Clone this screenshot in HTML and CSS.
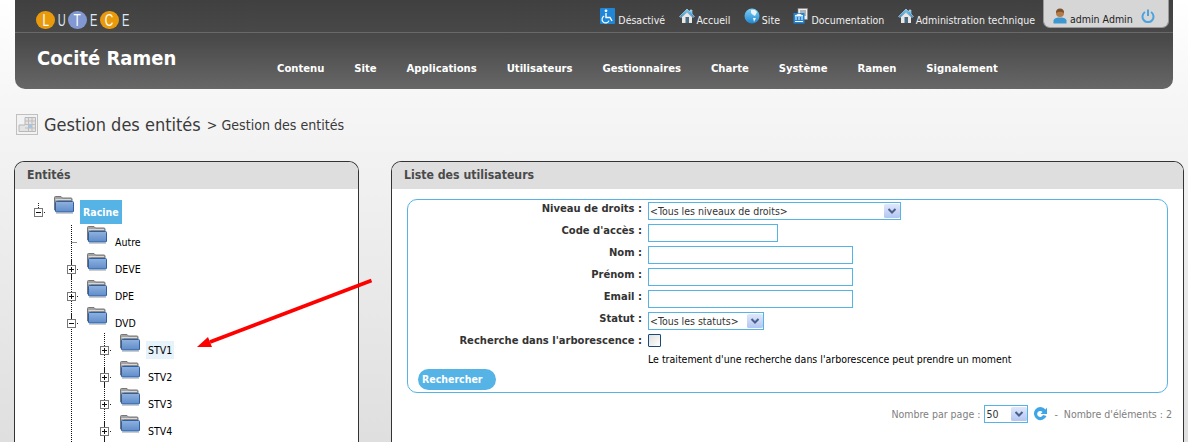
FILE: index.html
```html
<!DOCTYPE html>
<html lang="fr">
<head>
<meta charset="utf-8">
<title>Gestion des entités</title>
<link rel="stylesheet" href="styles.css">
</head>
<body>
<svg class="defs" width="0" height="0" aria-hidden="true">
  <defs>
    <linearGradient id="fb" x1="0" y1="0" x2="0" y2="1"><stop offset="0" stop-color="#8fb2e0"/><stop offset="1" stop-color="#5f8cc8"/></linearGradient>
    <linearGradient id="hb" x1="0" y1="0" x2="0" y2="1"><stop offset="0" stop-color="#7fd0f5"/><stop offset="1" stop-color="#1f86cf"/></linearGradient>
    <linearGradient id="cb" x1="0" y1="0" x2="0" y2="1"><stop offset="0" stop-color="#dfe7fb"/><stop offset="1" stop-color="#b3c6f1"/></linearGradient>
    <symbol id="folder" viewBox="0 0 20 18">
      <path d="M0.5 1.5 Q0.5 0.5 1.5 0.5 H7 L8.5 2 H17 Q18 2 18 3 V5 H4 V14 H0.5 Z" fill="#a3a3a3" stroke="#777"/>
      <path d="M1.5 3.5 H17" stroke="#d8d8d8"/>
      <rect x="1.5" y="5.5" width="18" height="10.5" rx="1" fill="url(#fb)" stroke="#2f5f9f"/>
      <path d="M2 17.5 H19" stroke="#ccc"/>
    </symbol>
    <symbol id="plus" viewBox="0 0 14 20">
      <path d="M4.5 0 V5" stroke="#222" stroke-dasharray="1 1"/>
      <path d="M4.5 14 V20" stroke="#222" stroke-dasharray="1 1"/>
      <rect x="0.5" y="5.5" width="8" height="8" fill="#fff" stroke="#777"/>
      <path d="M2 9.5 H7 M4.5 7 V12" stroke="#111"/>
      <path d="M10 9.5 H11" stroke="#222"/>
    </symbol>
    <symbol id="minus" viewBox="0 0 14 20">
      <path d="M4.5 0 V5" stroke="#222" stroke-dasharray="1 1"/>
      <rect x="0.5" y="5.5" width="8" height="8" fill="#fff" stroke="#777"/>
      <path d="M2 9.5 H7" stroke="#111"/>
      <path d="M10 9.5 H11" stroke="#222"/>
    </symbol>
    <symbol id="leaf" viewBox="0 0 14 20">
      <path d="M4.5 9.5 H10" stroke="#222" stroke-dasharray="1 1"/>
    </symbol>
    <symbol id="house" viewBox="0 0 16 16">
      <path d="M8 1 L0.5 8.5 L2 9.5 L8 4 L14 9.5 L15.5 8.5 L13 6 V2 H11 V4 Z" fill="url(#hb)" stroke="#d8f0ff" stroke-width=".5"/>
      <path d="M3 9 L8 4.5 L13 9 V15 H3 Z" fill="#e8e8e8"/>
      <rect x="6.5" y="9" width="3.5" height="6" fill="#4a6a80"/>
    </symbol>
    <symbol id="wheel" viewBox="0 0 15 16">
      <rect x="0" y="0" width="15" height="16" rx="1" fill="#1f86d8"/>
      <circle cx="6" cy="2.8" r="1.4" fill="#fff"/>
      <path d="M6 5 V9.5 H10 L12 13" fill="none" stroke="#fff" stroke-width="1.4"/>
      <path d="M4.2 8 A3.6 3.6 0 1 0 9 12.6" fill="none" stroke="#fff" stroke-width="1.2"/>
    </symbol>
    <symbol id="globe" viewBox="0 0 16 16">
      <circle cx="8" cy="8" r="7.5" fill="url(#hb)"/>
      <path d="M7 2 Q11 1 13 4 L11 8 L9 7 L7 5 Z M9 10 L12 10 L10 14 Z" fill="#e8f4fb"/>
    </symbol>
    <symbol id="doc" viewBox="0 0 15 16">
      <rect x="5" y="0.5" width="9.5" height="11" fill="#eee" stroke="#888" stroke-width=".6"/>
      <path d="M7 3 H13 M7 5 H13 M7 7 H13" stroke="#777"/>
      <rect x="0.5" y="5" width="11" height="10.5" fill="#1f86d8"/>
      <path d="M2 8 L6 6 L10 8 Z M3 9 V12 M6 9 V12 M9 9 V12 M2 13.5 H10" stroke="#fff" fill="#fff"/>
    </symbol>
    <symbol id="user" viewBox="0 0 14 16">
      <path d="M0.5 15.5 V12.5 Q1 10 5 9.5 H9 Q13 10 13.5 12.5 V15.5 Z" fill="#3f97d2"/>
      <circle cx="7" cy="5" r="4" fill="#b47a48"/>
      <path d="M3 5 Q3 0.5 7 0.5 Q11 0.5 11 5 Q7 2.5 3 5 Z" fill="#7a5230"/>
    </symbol>
    <symbol id="power" viewBox="0 0 14 14">
      <path d="M4 3 A5.5 5.5 0 1 0 10 3" fill="none" stroke="#4aa3de" stroke-width="2"/>
      <path d="M7 0.5 V7" stroke="#4aa3de" stroke-width="2"/>
    </symbol>
    <symbol id="chev" viewBox="0 0 16 14">
      <rect x="0" y="0" width="16" height="14" rx="1.5" fill="url(#cb)"/>
      <path d="M4.5 5 L8 8.5 L11.5 5" fill="none" stroke="#4a5f8c" stroke-width="2"/>
    </symbol>
    <symbol id="refresh" viewBox="0 0 16 16">
      <path d="M13.5 3.5 A6.5 6.5 0 1 0 14.5 10 L11 9 A3 3 0 1 1 10.5 6 L8.5 8 H15 V1.5 Z" fill="#3fa6e6"/>
    </symbol>
    <symbol id="pageicon" viewBox="0 0 22 21">
      <rect x="0.5" y="0.5" width="21" height="20" fill="#f2f2f2" stroke="#c0c0c0"/>
      <path d="M9 3.5 H19.5 V17.5 H3 V11 H9 Z" fill="#e3e3e3" stroke="#b8b8b8"/>
      <path d="M9 7 H19.5 M9 10.5 H19.5 M9 14 H19.5 M12.5 3.5 V17.5 M16 3.5 V17.5" stroke="#bdbdbd"/>
      <rect x="12.5" y="10.5" width="3.5" height="3.5" fill="#a9c3e0"/>
    </symbol>
  </defs>
</svg>

<header class="site-head">
  <div class="head-top">
    <div class="logo">
      <span class="ball ball-o"><span class="nl">L</span></span><span class="lt">U</span><span class="ball ball-b"><span class="nl">T</span></span><span class="lt">E</span><span class="ball ball-o"><span class="nl">C</span></span><span class="lt">E</span>
    </div>
    <nav class="tools">
      <a class="tool"><svg class="ic15"><use href="#wheel"/></svg>Désactivé</a>
      <a class="tool"><svg class="ic16"><use href="#house"/></svg>Accueil</a>
      <a class="tool"><svg class="ic16"><use href="#globe"/></svg>Site</a>
      <a class="tool"><svg class="ic15"><use href="#doc"/></svg>Documentation</a>
      <a class="tool"><svg class="ic16"><use href="#house"/></svg>Administration technique</a>
    </nav>
    <div class="userbox">
      <svg class="ic-user"><use href="#user"/></svg><span>admin Admin</span><svg class="ic-power"><use href="#power"/></svg>
    </div>
  </div>
  <div class="head-main">
    <div class="brand">Cocité Ramen</div>
    <nav class="menu">
      <a>Contenu</a><a>Site</a><a>Applications</a><a>Utilisateurs</a><a>Gestionnaires</a><a>Charte</a><a>Système</a><a>Ramen</a><a>Signalement</a>
    </nav>
  </div>
</header>

<div class="crumb">
  <svg class="ic-page"><use href="#pageicon"/></svg>
  <span class="crumb-main">Gestion des entités</span>
  <span class="crumb-sub">&gt; Gestion des entités</span>
</div>

<main class="columns">
  <section class="panel panel-left">
    <h2 class="panel-head">Entités</h2>
    <div class="tree">
      <div class="node node-root">
        <svg class="tg"><use href="#minus"/></svg><svg class="fd"><use href="#folder"/></svg><span class="lb lb-root">Racine</span>
      </div>
      <ul class="branch">
        <li><div class="node"><svg class="tg"><use href="#leaf"/></svg><svg class="fd"><use href="#folder"/></svg><span class="lb">Autre</span></div></li>
        <li><div class="node"><svg class="tg"><use href="#plus"/></svg><svg class="fd"><use href="#folder"/></svg><span class="lb">DEVE</span></div></li>
        <li><div class="node"><svg class="tg"><use href="#plus"/></svg><svg class="fd"><use href="#folder"/></svg><span class="lb">DPE</span></div></li>
        <li><div class="node"><svg class="tg"><use href="#minus"/></svg><svg class="fd"><use href="#folder"/></svg><span class="lb">DVD</span></div>
          <ul class="branch">
            <li><div class="node"><svg class="tg"><use href="#plus"/></svg><svg class="fd"><use href="#folder"/></svg><span class="lb lb-hover">STV1</span></div></li>
            <li><div class="node"><svg class="tg"><use href="#plus"/></svg><svg class="fd"><use href="#folder"/></svg><span class="lb">STV2</span></div></li>
            <li><div class="node"><svg class="tg"><use href="#plus"/></svg><svg class="fd"><use href="#folder"/></svg><span class="lb">STV3</span></div></li>
            <li><div class="node"><svg class="tg"><use href="#plus"/></svg><svg class="fd"><use href="#folder"/></svg><span class="lb">STV4</span></div></li>
          </ul>
        </li>
      </ul>
    </div>
  </section>

  <section class="panel panel-right">
    <h2 class="panel-head">Liste des utilisateurs</h2>
    <div class="panel-body">
      <form class="filter">
        <div class="row"><label class="lab">Niveau de droits :</label><span class="sel w-253"><select><option>&lt;Tous les niveaux de droits&gt;</option></select><svg class="chev"><use href="#chev"/></svg></span></div>
        <div class="row"><label class="lab">Code d'accès :</label><input class="txt w-130" type="text"></div>
        <div class="row"><label class="lab">Nom :</label><input class="txt w-205" type="text"></div>
        <div class="row"><label class="lab">Prénom :</label><input class="txt w-205" type="text"></div>
        <div class="row"><label class="lab">Email :</label><input class="txt w-205" type="text"></div>
        <div class="row"><label class="lab">Statut :</label><span class="sel w-116"><select><option>&lt;Tous les statuts&gt;</option></select><svg class="chev"><use href="#chev"/></svg></span></div>
        <div class="row row-check"><label class="lab">Recherche dans l'arborescence :</label><input class="chk" type="checkbox"></div>
        <div class="help">Le traitement d'une recherche dans l'arborescence peut prendre un moment</div>
        <button class="btn" type="button">Rechercher</button>
      </form>
      <div class="pager">
        <span>Nombre par page :</span>
        <span class="sel w-44"><select><option>50</option></select><svg class="chev"><use href="#chev"/></svg></span>
        <svg class="ic-refresh"><use href="#refresh"/></svg>
        <span class="dash">-</span>
        <span>Nombre d'éléments : 2</span>
      </div>
    </div>
  </section>
</main>

<svg class="arrow" width="190" height="80" viewBox="0 0 190 80" aria-hidden="true">
  <path d="M181.5 6.5 L20 68" stroke="#f00" stroke-width="3.6" fill="none"/>
  <path d="M7 73 L18 63 L22 73 Z" fill="#f00"/>
</svg>
</body>
</html>
```
FILE: styles.css
```css
* { box-sizing: border-box; }
html, body { margin: 0; height: 442px; overflow: hidden; }
body {
  font-family: "DejaVu Sans Condensed", "DejaVu Sans", sans-serif;
  font-size: 10.5px;
  color: #000;
  background: linear-gradient(#fff 0, #f6f6f6 100px, #dfdfdf 442px);
  position: relative;
}
.defs { position: absolute; }
svg { display: block; flex: none; }

/* header */
.site-head {
  margin: 0 15px;
  height: 89px;
  border-radius: 0 0 10px 10px;
  background: linear-gradient(#404040, #4a4a4a 45%, #676767);
  color: #fff;
}
.head-top {
  height: 33px;
  display: flex;
  border-bottom: 1px solid #696969;
  padding-left: 21px;
}
.logo { display: flex; align-items: center; height: 20px; margin-top: 10px; font: 17px/19px "Liberation Sans", sans-serif; }
.ball { width: 18.5px; height: 18.5px; border-radius: 50%; text-align: center; color: #fff; }
.nl { display: inline-block; transform: scaleX(.7); }
.ball-o { background: #e99a0c; }
.ball-b { background: #8198d2; }
.lt { width: 13.5px; text-align: center; color: #dfeaf2; transform: scaleX(.65); }
.tools { display: flex; margin-left: auto; gap: 13.5px; padding-top: 8px; color: #f0f0f0; }
.tool {
  white-space: nowrap;
  height: 20px;
  line-height: 13px;
  padding: 6px 0 0 18px;
  position: relative;
}
.tool svg { position: absolute; left: 0; top: 0; }
.ic15 { width: 15px; height: 16px; }
.ic16 { width: 16px; height: 16px; }
.userbox {
  width: 126px;
  height: 28px;
  margin: 0 4px 0 8px;
  background: #d6d6d6;
  border-radius: 0 0 7px 7px;
  border: 1px solid #9a9a9a;
  border-top: 0;
  color: #222;
  display: flex;
  align-items: flex-start;
  padding: 8px 0 0 9px;
  line-height: 13px;
}
.userbox span { margin: 5px 0 0 3px; white-space: nowrap; }
.ic-user { width: 14px; height: 16px; }
.ic-power { width: 14px; height: 14px; margin: 1px 0 0 8px; }
.head-main { display: flex; padding-left: 22px; }
.brand {
  font-weight: 700;
  font-size: 20px;
  line-height: 22px;
  margin-top: 14px;
  width: 240px;
  white-space: nowrap;
}
.menu {
  display: flex;
  gap: 29.9px;
  font-weight: 700;
  font-size: 11.2px;
  line-height: 13px;
  margin-top: 29px;
}

/* breadcrumb */
.crumb { display: flex; align-items: center; height: 22px; margin: 24px 0 0 16px; color: #333; }
.ic-page { width: 22px; height: 21px; }
.crumb-main { font-size: 18px; margin-left: 6px; color: #3a3a3a; }
.crumb-sub { font-size: 14.1px; margin: 2px 0 0 6px; color: #3a3a3a; }

/* columns */
.columns { display: flex; gap: 32px; padding-left: 14px; margin-top: 26px; }
.panel {
  border: 1px solid #333;
  border-bottom: 0;
  border-radius: 10px 10px 0 0;
  background: #fff;
  height: 300px;
  overflow: hidden;
}
.panel-left { width: 345px; }
.panel-right { width: 793px; }
.panel-head {
  margin: 0;
  height: 27px;
  padding-left: 12px;
  background: #dedede;
  color: #4a4a4a;
  font-size: 12.2px;
  font-weight: 700;
  line-height: 26px;
}

/* tree */
.tree { padding: 7px 0 0 19px; }
.node { display: flex; align-items: flex-start; height: 27px; }
.node-root { height: 30px; }
.tg { width: 14px; height: 20px; margin: 7px 6px 0 0; }
.fd { width: 20px; height: 18px; }
.lb { margin: 7px 0 0 6px; padding: 0 2px; height: 18px; line-height: 18px; white-space: nowrap; }
.lb-root { margin-top: 4px; height: 24px; line-height: 24px; padding: 0 3px; background: #55b3e6; color: #fff; font-weight: 700; }
.lb-hover { background: #e6f3fa; }
.branch { list-style: none; margin: 0; padding: 0 0 0 33px; position: relative; }
.branch::before {
  content: "";
  position: absolute;
  left: 37px;
  top: -1px;
  bottom: 0;
  border-left: 1px dotted #111;
}
.branch li { position: relative; }

/* right panel */
.panel-body { padding: 10px 15px 0; }
.filter { border: 1px solid #55b3e6; border-radius: 10px; padding: 2px 0 2px; color: #333; }
.row { display: flex; gap: 6px; height: 22px; align-items: flex-start; }
.row-check { height: 18px; }
.lab { width: 234px; text-align: right; font-weight: 700; font-size: 11.1px; line-height: 14px; white-space: nowrap; }
.txt { height: 18px; border: 1px solid #55b3e6; background: #fff; padding: 0 2px; display: block; font: inherit; }
.w-130 { width: 130px; }
.w-205 { width: 205px; }
.w-253 { width: 253px; }
.w-116 { width: 116px; }
.w-44 { width: 44px; }
.sel { display: block; position: relative; height: 18px; }
.sel select {
  appearance: none;
  width: 100%;
  height: 18px;
  border: 1px solid #55b3e6;
  border-radius: 0;
  background: #fff;
  padding: 0 0 0 1px;
  font: inherit;
  color: #333;
  display: block;
}
.chev { position: absolute; right: 1px; top: 2px; width: 16px; height: 14px; }
.chk {
  appearance: none;
  margin: 0;
  width: 13px;
  height: 13px;
  border: 1px solid #1c4a78;
  border-radius: 1px;
  background: linear-gradient(135deg, #e0e0de, #fff);
}
.help { margin-left: 240px; height: 14px; line-height: 14px; color: #000; }
.btn {
  display: block;
  margin: 3px 0 0 10px;
  width: 78px;
  height: 21px;
  border: 0;
  border-radius: 11px;
  background: #55b3e6;
  color: #fff;
  font: inherit;
  font-weight: 700;
  padding: 0 0 2px 4px;
  text-align: left;
}
.pager {
  display: flex;
  justify-content: flex-end;
  align-items: center;
  height: 18px;
  margin: 12px -4px 0 0;
  color: #808080;
  white-space: nowrap;
}
.pager .sel { margin-left: 4px; }
.ic-refresh { width: 16px; height: 16px; margin-left: 4px; }
.dash { margin: 0 6px; }

/* annotation */
.arrow { position: absolute; left: 190px; top: 274px; }
```
